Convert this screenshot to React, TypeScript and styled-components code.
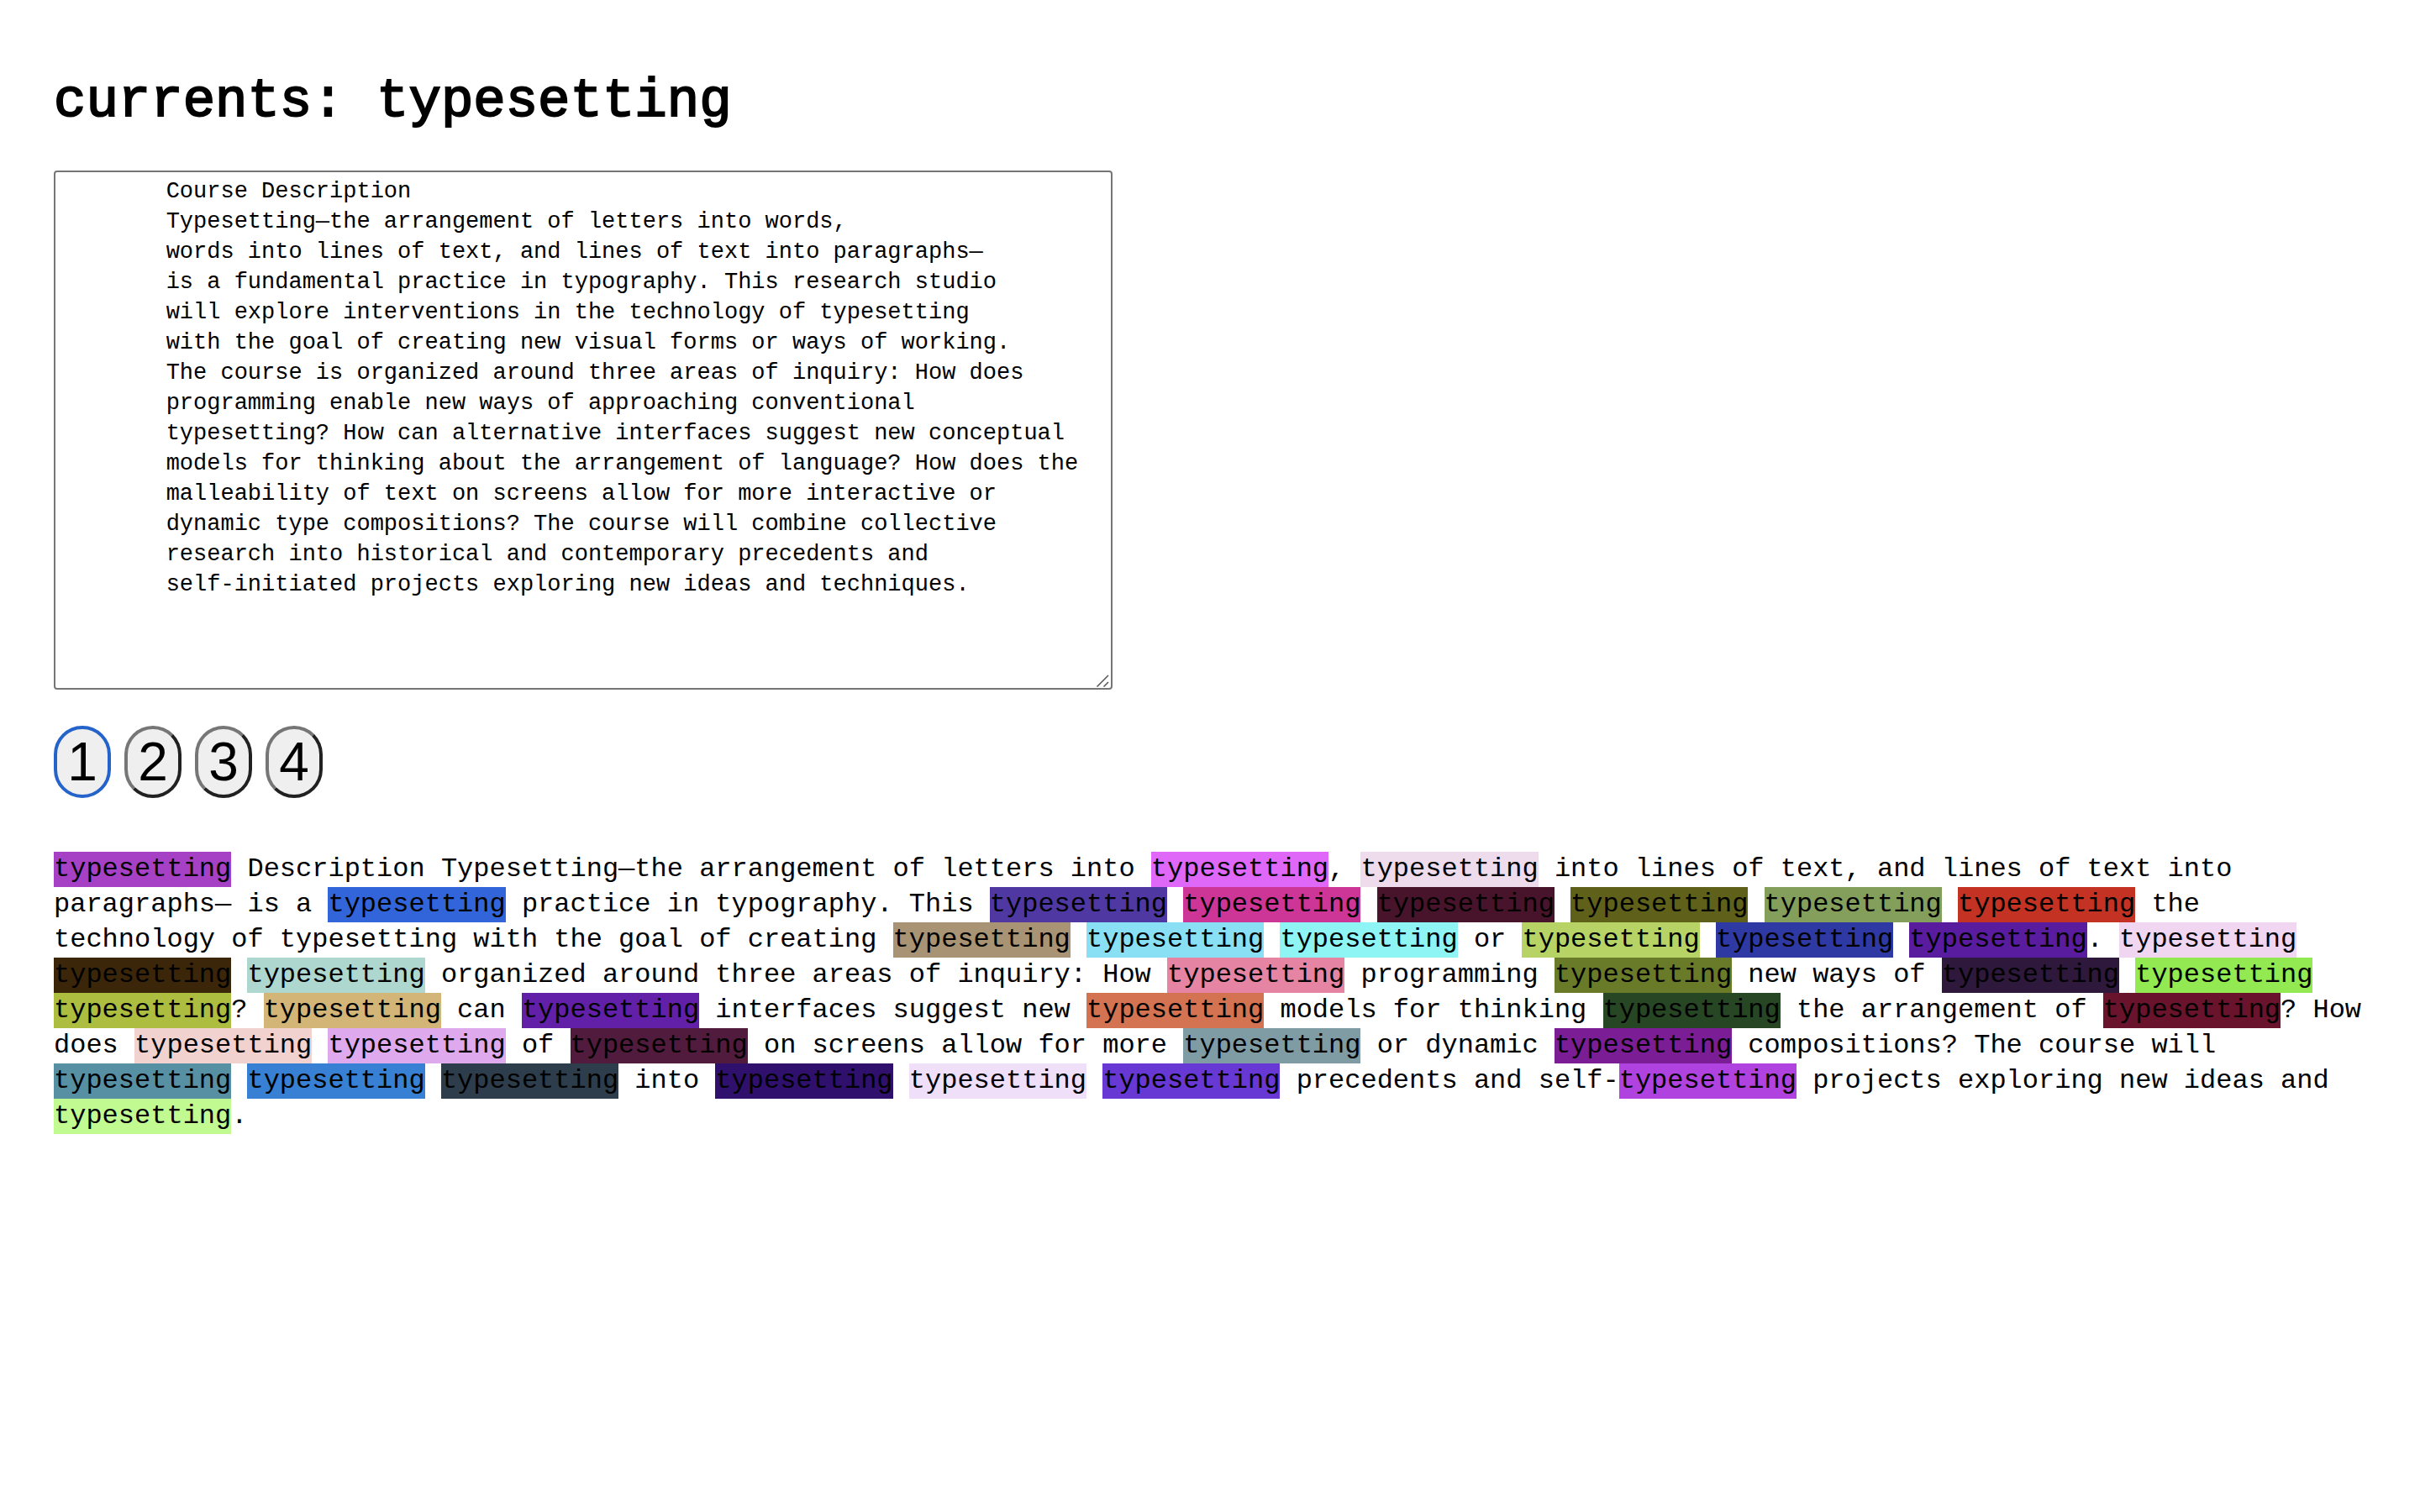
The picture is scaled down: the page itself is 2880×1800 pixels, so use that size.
import React, { useState } from "react";
import styled, { createGlobalStyle } from "styled-components";

const GlobalStyle = createGlobalStyle`
  body {
    margin: 0;
    background: #ffffff;
    color: #000000;
    font-family: "Liberation Mono", monospace;
  }
`;

const Page = styled.main`
  display: flex;
  flex-direction: column;
  align-items: flex-start;
  padding: 79px 64px 64px;
`;

const Title = styled.h1`
  margin: 0 0 40px;
  font-size: 64px;
  font-weight: 400;
  line-height: 84px;
  -webkit-text-stroke: 2px #000000;
`;

const Editor = styled.div`
  position: relative;
  width: 1260px;
  max-width: 100%;
`;

const Source = styled.textarea`
  display: block;
  box-sizing: border-box;
  width: 100%;
  height: 618px;
  margin: 0;
  padding: 5px 2px 0;
  border: 2px solid #767676;
  border-radius: 4px;
  background: #ffffff;
  color: #000000;
  font-family: "Liberation Mono", monospace;
  font-size: 27px;
  line-height: 36px;
  resize: none;
  outline: none;
  overflow: hidden;
`;

const Grip = styled.svg`
  position: absolute;
  right: 4px;
  bottom: 2px;
  pointer-events: none;
`;

const Modes = styled.div`
  display: flex;
  gap: 16px;
  margin: 43px 0 64px;
`;

const ModeButton = styled.button<{ $active: boolean }>`
  min-width: 68px;
  margin: 0;
  padding: 2px 12px;
  border: 4px solid;
  border-color: ${(p) => (p.$active ? "#2463c9" : "#767676 #212121 #212121 #767676")};
  border-radius: 34px;
  background: #efefef;
  color: #000000;
  font-family: "Liberation Sans", Arial, sans-serif;
  font-size: 64px;
  line-height: 74px;
  outline: none;
`;

const Output = styled.p`
  margin: 0;
  font-size: 32px;
  line-height: 42px;
`;

const Mark = styled.span<{ $color: string }>`
  display: inline-block;
  background: ${(p) => p.$color};
`;

const description = [
  "Course Description",
  "Typesetting—the arrangement of letters into words,",
  "words into lines of text, and lines of text into paragraphs—",
  "is a fundamental practice in typography. This research studio",
  "will explore interventions in the technology of typesetting",
  "with the goal of creating new visual forms or ways of working.",
  "The course is organized around three areas of inquiry: How does",
  "programming enable new ways of approaching conventional",
  "typesetting? How can alternative interfaces suggest new conceptual",
  "models for thinking about the arrangement of language? How does the",
  "malleability of text on screens allow for more interactive or",
  "dynamic type compositions? The course will combine collective",
  "research into historical and contemporary precedents and",
  "self-initiated projects exploring new ideas and techniques.",
]
  .map((line) => " ".repeat(8) + line)
  .join("\n");

// Every # stands for a replaced word, coloured in order from the list below.
const template =
  "# Description Typesetting—the arrangement of letters into #, # into lines of text, and lines of text into " +
  "paragraphs— is a # practice in typography. This # # # # # # the " +
  "technology of typesetting with the goal of creating # # # or # # #. # " +
  "# # organized around three areas of inquiry: How # programming # new ways of # # " +
  "#? # can # interfaces suggest new # models for thinking # the arrangement of #? How " +
  "does # # of # on screens allow for more # or dynamic # compositions? The course will " +
  "# # # into # # # precedents and self-# projects exploring new ideas and #.";

const colors = [
  "#a641c5", "#df68f8", "#eedced",
  "#3265da", "#4f38a2", "#cd3597", "#48142b", "#5f611b", "#849e5c", "#c33222",
  "#a89374", "#89e0f4", "#8ff4f4", "#b8d365", "#2e39a3", "#591c9f", "#f0d6f1",
  "#3c260a", "#aed8cf", "#e585a3", "#697b29", "#2e183c", "#92e951",
  "#adbd3f", "#d3b577", "#6120a7", "#d47351", "#274623", "#69132c",
  "#f2d2ce", "#dea9ed", "#511b3d", "#7f9ba4", "#7b1d94",
  "#5790a3", "#3780d3", "#2d3d4c", "#30106d", "#efdff9", "#6738d3", "#b042df",
  "#c1fa91",
];

const pieces = template.split("#");

export default function App() {
  const [mode, setMode] = useState(1);

  return (
    <>
      <GlobalStyle />
      <Page>
        <Title>currents: typesetting</Title>
        <Editor>
          <Source aria-label="Source text" defaultValue={description} spellCheck={false} />
          <Grip width="16" height="18" viewBox="0 0 16 18" fill="none" stroke="#555555" strokeWidth="1.5" aria-hidden="true">
            <path d="M1.500 16.500L15 3M9.500 16.500L15 11" />
          </Grip>
        </Editor>
        <Modes>
          {[1, 2, 3, 4].map((n) => (
            <ModeButton key={n} type="button" $active={mode === n} onClick={() => setMode(n)}>
              {n}
            </ModeButton>
          ))}
        </Modes>
        <Output>
          {pieces.map((piece, i) => (
            <React.Fragment key={i}>
              {piece}
              {i < colors.length && <Mark $color={colors[i]}>typesetting</Mark>}
            </React.Fragment>
          ))}
        </Output>
      </Page>
    </>
  );
}
